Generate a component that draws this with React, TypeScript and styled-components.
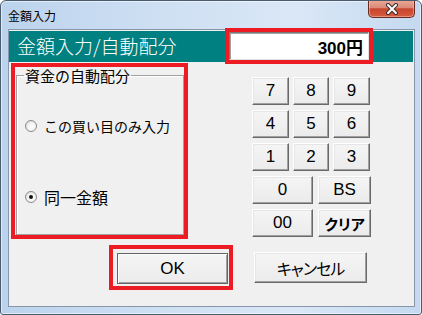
import React from "react";
import styled, { createGlobalStyle, css } from "styled-components";

const jp = `"Noto Sans CJK JP", "Liberation Sans", sans-serif`;
const latin = `"Liberation Sans", "Noto Sans CJK JP", sans-serif`;
const red = "#ed1c24";

const GlobalStyle = createGlobalStyle`
  html, body {
    margin: 0;
    padding: 0;
    width: 422px;
    height: 315px;
    overflow: hidden;
    background: #fff;
  }
  * { box-sizing: border-box; }
`;

const Window = styled.div`
  width: 422px;
  height: 315px;
  display: flex;
  flex-direction: column;
  border: 1px solid #4a5b6e;
  border-radius: 6px 6px 3px 3px;
  background: linear-gradient(to right, #bcd3ed 0%, #cfe0f3 40%, #dae7f6 70%, #c4d9f0 100%);
  box-shadow: inset 0 0 0 1px rgba(255, 255, 255, 0.55);
  overflow: hidden;
`;

const TitleBar = styled.div`
  height: 28px;
  flex: none;
  display: flex;
  align-items: flex-start;
  padding: 0 6px 0 7px;
`;

const TitleText = styled.span`
  margin-top: 7px;
  font-family: ${jp};
  font-size: 12px;
  line-height: 16px;
  color: #000;
`;

const CloseButton = styled.div`
  margin-left: auto;
  width: 47px;
  height: 18px;
  margin-top: -1px;
  display: flex;
  align-items: center;
  justify-content: center;
  border: 1px solid #6b2a1f;
  border-top: none;
  border-radius: 0 0 5px 5px;
  background: linear-gradient(#eaa999 0%, #db8b78 45%, #c8452e 52%, #d55c40 100%);
  box-shadow: inset 0 0 0 1px rgba(255, 210, 200, 0.45);
`;

const Client = styled.div`
  flex: 1;
  margin: 0 6px 7px 7px;
  border: 1px solid #8796a8;
  background: #f0f0f0;
  padding: 1px 1px 0 0;
  display: flex;
  flex-direction: column;
`;

const Header = styled.div`
  height: 31px;
  flex: none;
  background: #008080;
  display: flex;
  align-items: center;
  justify-content: space-between;
  padding: 0 44px 0 8px;
`;

const HeaderTitle = styled.span`
  font-family: ${jp};
  font-size: 19px;
  font-weight: 300;
  line-height: 24px;
  color: #fff;
  margin-top: -1px;
`;

const AmountBox = styled.div`
  width: 140px;
  height: 28px;
  margin-top: -1px;
  background: #fff;
  border: 1px solid;
  border-color: #7a7a7a #e3e3e3 #e3e3e3 #7a7a7a;
  box-shadow: inset 1px 1px 0 #a0a0a0;
  outline: 4px solid ${red};
  display: flex;
  align-items: center;
  justify-content: flex-end;
  padding-right: 5px;
  font-family: ${latin};
  font-weight: bold;
  font-size: 17px;
  color: #000;
`;

const Body = styled.div`
  display: flex;
  align-items: flex-start;
  margin-top: 1px;
  padding-left: 2px;
`;

const GroupFrame = styled.div`
  width: 177px;
  height: 176px;
  border: 4px solid ${red};
  padding-left: 1px;
`;

const GroupBox = styled.fieldset`
  width: 168px;
  height: 168px;
  margin: 0;
  padding: 0 0 0 8px;
  border: 1px solid #a0a0a0;
  box-shadow: inset 1px 1px 0 #fff;
  display: flex;
  flex-direction: column;
  gap: 51px;
`;

const Legend = styled.legend`
  margin-left: -1px;
  padding: 0 1px;
  font-family: ${jp};
  font-size: 15px;
  line-height: 17px;
  color: #000;
`;

const RadioRow = styled.label`
  display: flex;
  align-items: center;
  gap: 7px;
  height: 20px;
  font-family: ${jp};
  color: #000;
  &:first-of-type { margin-top: 32px; }
`;

const RadioDot = styled.span<{ $checked?: boolean }>`
  width: 12px;
  height: 12px;
  flex: none;
  border-radius: 50%;
  border: 1px solid #8a8a8a;
  background: radial-gradient(circle at 60% 60%, #ffffff 0%, #f3f3f3 45%, #d0d0d0 100%);
  display: flex;
  align-items: center;
  justify-content: center;
  ${(p) =>
    p.$checked &&
    css`
      &::after {
        content: "";
        width: 4px;
        height: 4px;
        border-radius: 50%;
        background: #111;
      }
    `}
`;

const RadioText = styled.span<{ $size: number }>`
  font-size: ${(p) => p.$size}px;
  line-height: 20px;
`;

const Keypad = styled.div`
  margin: 14px 0 0 64px;
  display: flex;
  flex-direction: column;
  gap: 5px;
`;

const KeyRow = styled.div<{ $gap: number }>`
  display: flex;
  gap: ${(p) => p.$gap}px;
`;

const Button = styled.button<{ $w: number; $h: number; $default?: boolean; $bold?: boolean }>`
  width: ${(p) => p.$w}px;
  height: ${(p) => p.$h}px;
  margin: 0;
  padding: 0;
  font-family: ${latin};
  font-size: ${(p) => (p.$bold ? 15 : 17)}px;
  font-weight: ${(p) => (p.$bold ? "bold" : "normal")};
  font-feature-settings: "palt";
  color: #000;
  background: linear-gradient(#f5f5f5, #ebebeb);
  border: 1px solid;
  border-color: #ffffff #696969 #696969 #ffffff;
  box-shadow: inset -1px -1px 0 #a0a0a0, inset 1px 1px 0 #e6e6e6;
  display: flex;
  align-items: center;
  justify-content: center;
  ${(p) =>
    p.$default &&
    css`
      border-color: #646464;
      box-shadow: inset 1px 1px 0 #ffffff, inset -1px -1px 0 #a0a0a0;
    `}
`;

const CancelButton = styled(Button)`
  margin-left: 21px;
`;

const Footer = styled.div`
  display: flex;
  align-items: center;
  margin-top: 6px;
  padding-left: 100px;
`;

const OkFrame = styled.div`
  border: 4px solid ${red};
  padding: 4px 1px 2px 4px;
`;

const CancelLabel = styled.span`
  font-family: ${jp};
  font-size: 16px;
  letter-spacing: -1px;
  font-feature-settings: "palt";
`;

const keyRows: string[][] = [
  ["7", "8", "9"],
  ["4", "5", "6"],
  ["1", "2", "3"],
];

export default function App() {
  return (
    <>
      <GlobalStyle />
      <Window>
        <TitleBar>
          <TitleText>金額入力</TitleText>
          <CloseButton>
            <svg width="14" height="12" viewBox="0 0 14 12">
              <path d="M3 2 L11 10 M11 2 L3 10" stroke="#3c3030" strokeWidth="4" strokeLinecap="round" />
              <path d="M3 2 L11 10 M11 2 L3 10" stroke="#ffffff" strokeWidth="2" strokeLinecap="round" />
            </svg>
          </CloseButton>
        </TitleBar>
        <Client>
          <Header>
            <HeaderTitle>金額入力/自動配分</HeaderTitle>
            <AmountBox>300円</AmountBox>
          </Header>
          <Body>
            <GroupFrame>
              <GroupBox>
                <Legend>資金の自動配分</Legend>
                <RadioRow>
                  <RadioDot />
                  <RadioText $size={14}>この買い目のみ入力</RadioText>
                </RadioRow>
                <RadioRow>
                  <RadioDot $checked />
                  <RadioText $size={16}>同一金額</RadioText>
                </RadioRow>
              </GroupBox>
            </GroupFrame>
            <Keypad>
              {keyRows.map((row, i) => (
                <KeyRow key={i} $gap={4}>
                  {row.map((k, j) => (
                    <Button key={k} $w={j === 1 ? 36 : 37} $h={28}>
                      {k}
                    </Button>
                  ))}
                </KeyRow>
              ))}
              <KeyRow $gap={5}>
                <Button $w={61} $h={28}>0</Button>
                <Button $w={53} $h={28}>BS</Button>
              </KeyRow>
              <KeyRow $gap={5}>
                <Button $w={61} $h={28}>00</Button>
                <Button $w={53} $h={28} $bold>クリア</Button>
              </KeyRow>
            </Keypad>
          </Body>
          <Footer>
            <OkFrame>
              <Button $w={111} $h={31} $default>OK</Button>
            </OkFrame>
            <CancelButton $w={113} $h={31}>
              <CancelLabel>キャンセル</CancelLabel>
            </CancelButton>
          </Footer>
        </Client>
      </Window>
    </>
  );
}
